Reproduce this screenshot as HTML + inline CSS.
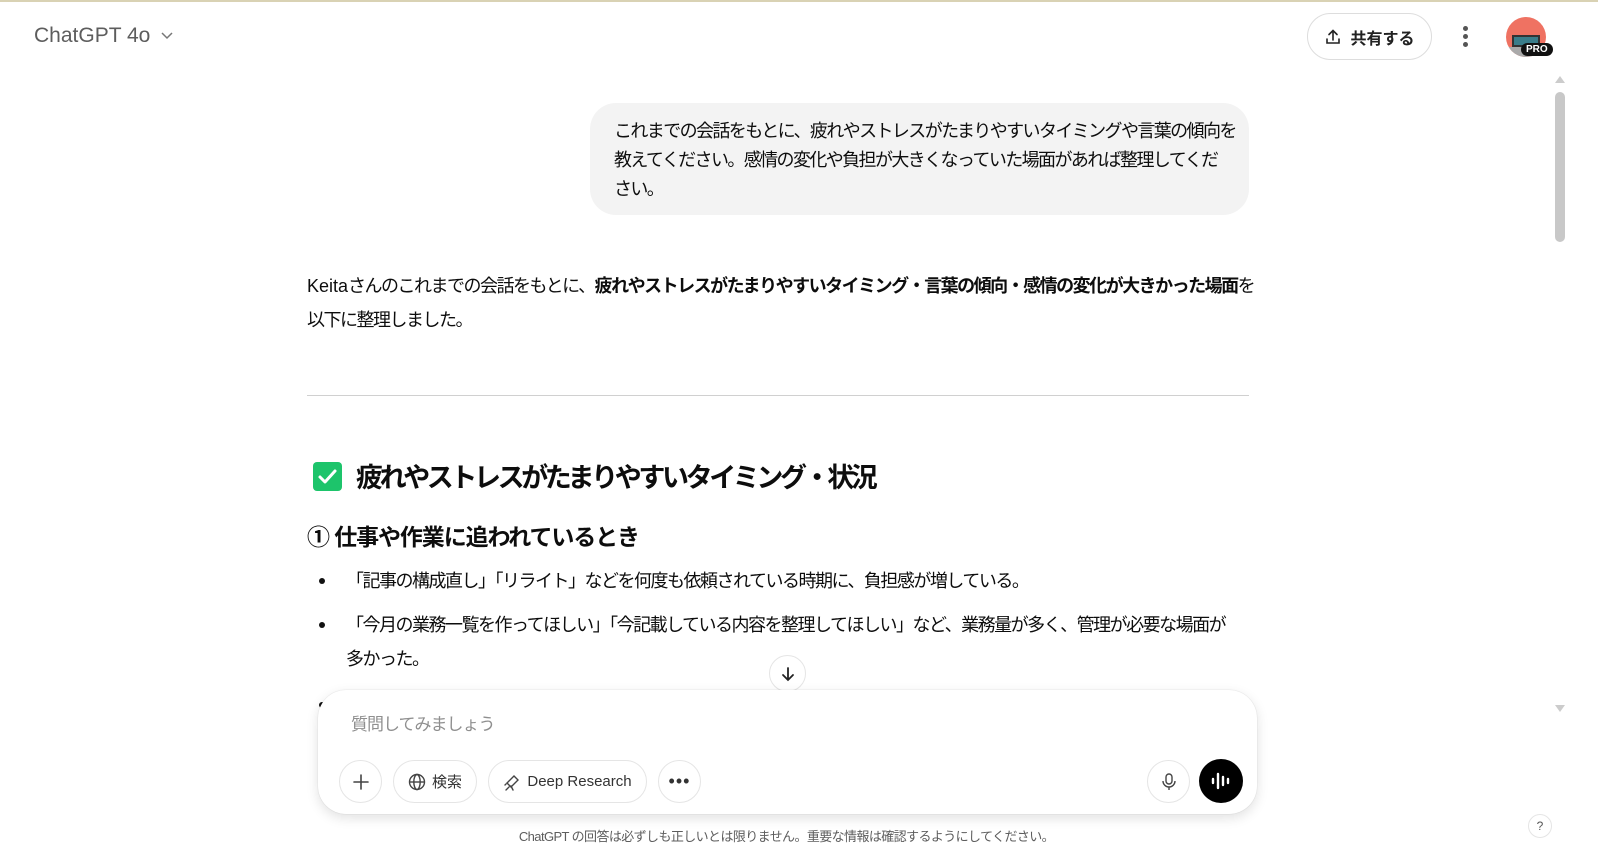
<!DOCTYPE html>
<html><head><meta charset="utf-8"><style>
*{margin:0;padding:0;box-sizing:border-box}
body{width:1598px;height:861px;overflow:hidden;background:#fff;font-family:"Liberation Sans","Noto Sans CJK JP",sans-serif;color:#0d0d0d;position:relative}
.a{position:absolute;white-space:nowrap}
.top{position:absolute;left:0;top:0;width:1598px;height:2px;background:#d9d2b4}
.bubble{position:absolute;left:590px;top:103px;width:659px;height:112px;background:#f3f3f3;border-radius:26px;padding:14px 24px;font-size:18px;line-height:29px;color:#0d0d0d;white-space:nowrap;letter-spacing:-1.6px}
.p{font-size:18px;line-height:34px;letter-spacing:-1.5px}
.l{letter-spacing:0}
.pill{position:absolute;top:760px;height:43px;border:1px solid #e5e5e5;border-radius:22px;display:flex;align-items:center;justify-content:center;font-size:15px;color:#333;gap:6px}
</style></head><body>
<div class="top"></div>
<div class="a" style="left:34px;top:24px;font-size:21px;color:#5d5d5d">ChatGPT 4o <svg width="14" height="14" viewBox="0 0 14 14" style="margin-left:4px"><path d="M2 5l5 5 5-5" fill="none" stroke="#777" stroke-width="1.5"/></svg></div>
<div class="a" style="left:1307px;top:13px;width:125px;height:47px;border:1px solid #ddd;border-radius:24px;display:flex;align-items:center;justify-content:center;gap:8px;font-size:16px;font-weight:bold;color:#222">
<svg width="18" height="18" viewBox="0 0 18 18"><path d="M9 12V3M5 6.5L9 2.5l4 4M3 11v4h12v-4" fill="none" stroke="#222" stroke-width="1.6" stroke-linecap="round"/></svg>共有する</div>
<div class="a" style="left:1463px;top:26px;width:5px"><div style="width:5px;height:5px;border-radius:50%;background:#555;margin-bottom:3px"></div><div style="width:5px;height:5px;border-radius:50%;background:#555;margin-bottom:3px"></div><div style="width:5px;height:5px;border-radius:50%;background:#555"></div></div>
<div class="a" style="left:1506px;top:17px;width:40px;height:40px;border-radius:50%;background:#ef7262;overflow:hidden"><div style="position:absolute;left:6px;top:18px;width:28px;height:12px;background:#3a7d8a;border:2px solid #333"></div><div style="position:absolute;left:0;top:30px;width:40px;height:10px;background:#aaa"></div></div>
<div class="a" style="left:1521px;top:43px;background:#111;color:#fff;font-size:10px;font-weight:bold;padding:1px 5px;border-radius:8px">PRO</div>
<div class="a" style="left:1555px;top:92px;width:10px;height:150px;background:#c8c8c8;border-radius:5px"></div>
<div class="a" style="left:1555px;top:76px;width:0;height:0;border-left:5px solid transparent;border-right:5px solid transparent;border-bottom:7px solid #ccc"></div>
<div class="a" style="left:1555px;top:705px;width:0;height:0;border-left:5px solid transparent;border-right:5px solid transparent;border-top:7px solid #ccc"></div>
<div class="bubble">これまでの会話をもとに、疲れやストレスがたまりやすいタイミングや言葉の傾向を<br>教えてください。感情の変化や負担が大きくなっていた場面があれば整理してくだ<br>さい。</div>
<div class="a p" style="left:307px;top:269px"><span class="l">Keita</span>さんのこれまでの会話をもとに、<b>疲れやストレスがたまりやすいタイミング・言葉の傾向・感情の変化が大きかった場面</b>を<br>以下に整理しました。</div>
<div class="a" style="left:307px;top:395px;width:942px;height:1px;background:#d0d0d0"></div>
<div class="a" style="left:313px;top:462px;width:29px;height:29px;background:#1dc46b;border-radius:4px"><svg width="29" height="29" viewBox="0 0 29 29"><path d="M7 15l5 5 10-11" fill="none" stroke="#fff" stroke-width="3" stroke-linecap="round" stroke-linejoin="round"/></svg></div>
<div class="a" style="left:356px;top:456px;font-size:27px;font-weight:bold;letter-spacing:-3.4px">疲れやストレスがたまりやすいタイミング・状況</div>
<div class="a" style="left:307px;top:518px;font-size:23px;font-weight:bold;letter-spacing:-1.1px">① 仕事や作業に追われているとき</div>
<div class="a" style="left:319px;top:578px;width:6px;height:6px;border-radius:50%;background:#111"></div>
<div class="a p" style="left:346px;top:564px">「記事の構成直し」「リライト」などを何度も依頼されている時期に、負担感が増している。</div>
<div class="a" style="left:319px;top:622px;width:6px;height:6px;border-radius:50%;background:#111"></div>
<div class="a p" style="left:346px;top:608px">「今月の業務一覧を作ってほしい」「今記載している内容を整理してほしい」など、業務量が多く、管理が必要な場面が<br>多かった。</div>
<div class="a" style="left:319px;top:702px;width:6px;height:6px;border-radius:50%;background:#111"></div>
<div class="a" style="left:769px;top:655px;width:37px;height:37px;border-radius:50%;background:#fff;border:1px solid #e5e5e5;display:flex;align-items:center;justify-content:center"><svg width="16" height="16" viewBox="0 0 16 16"><path d="M8 2v12M3 9l5 5 5-5" fill="none" stroke="#222" stroke-width="1.8" stroke-linecap="round"/></svg></div>
<div class="a" style="left:318px;top:690px;width:939px;height:124px;background:#fff;border-radius:28px;box-shadow:0 4px 12px rgba(0,0,0,.12),0 0 1px rgba(0,0,0,.2)"></div>
<div class="a" style="left:351px;top:710px;font-size:17px;color:#8f8f8f;letter-spacing:-1px">質問してみましょう</div>
<div class="pill" style="left:339px;width:43px"><svg width="18" height="18" viewBox="0 0 18 18"><path d="M9 2v14M2 9h14" stroke="#444" stroke-width="1.6" stroke-linecap="round"/></svg></div>
<div class="pill" style="left:393px;width:84px"><svg width="18" height="18" viewBox="0 0 18 18"><circle cx="9" cy="9" r="7.5" fill="none" stroke="#444" stroke-width="1.4"/><ellipse cx="9" cy="9" rx="3.2" ry="7.5" fill="none" stroke="#444" stroke-width="1.4"/><path d="M1.5 9h15" stroke="#444" stroke-width="1.4"/></svg>検索</div>
<div class="pill" style="left:488px;width:159px"><svg width="18" height="18" viewBox="0 0 18 18"><path d="M4 10l7-7 4 4-7 7zM6 14l-3 3M8 13l2 4M3 11l-1 1" fill="none" stroke="#444" stroke-width="1.4" stroke-linecap="round"/></svg>Deep Research</div>
<div class="pill" style="left:658px;width:43px;font-size:18px;letter-spacing:1px;color:#333">•••</div>
<div class="pill" style="left:1147px;width:43px"><svg width="16" height="18" viewBox="0 0 16 18"><rect x="5" y="1" width="6" height="10" rx="3" fill="none" stroke="#444" stroke-width="1.4"/><path d="M2 8a6 6 0 0012 0M8 14v3" fill="none" stroke="#444" stroke-width="1.4"/></svg></div>
<div class="a" style="left:1199px;top:759px;width:44px;height:44px;border-radius:50%;background:#000;display:flex;align-items:center;justify-content:center"><svg width="22" height="20" viewBox="0 0 22 20"><path d="M3 8v4M8 3v14M13 6v8M18 8v4" stroke="#fff" stroke-width="2.4" stroke-linecap="round"/></svg></div>
<div class="a" style="left:0;width:1573px;top:826px;text-align:center;font-size:13px;color:#5d5d5d;letter-spacing:-0.6px">ChatGPT の回答は必ずしも正しいとは限りません。重要な情報は確認するようにしてください。</div>
<div class="a" style="left:1528px;top:814px;width:24px;height:24px;border-radius:50%;border:1px solid #e5e5e5;text-align:center;font-size:12px;line-height:22px;color:#555">?</div>
</body></html>
